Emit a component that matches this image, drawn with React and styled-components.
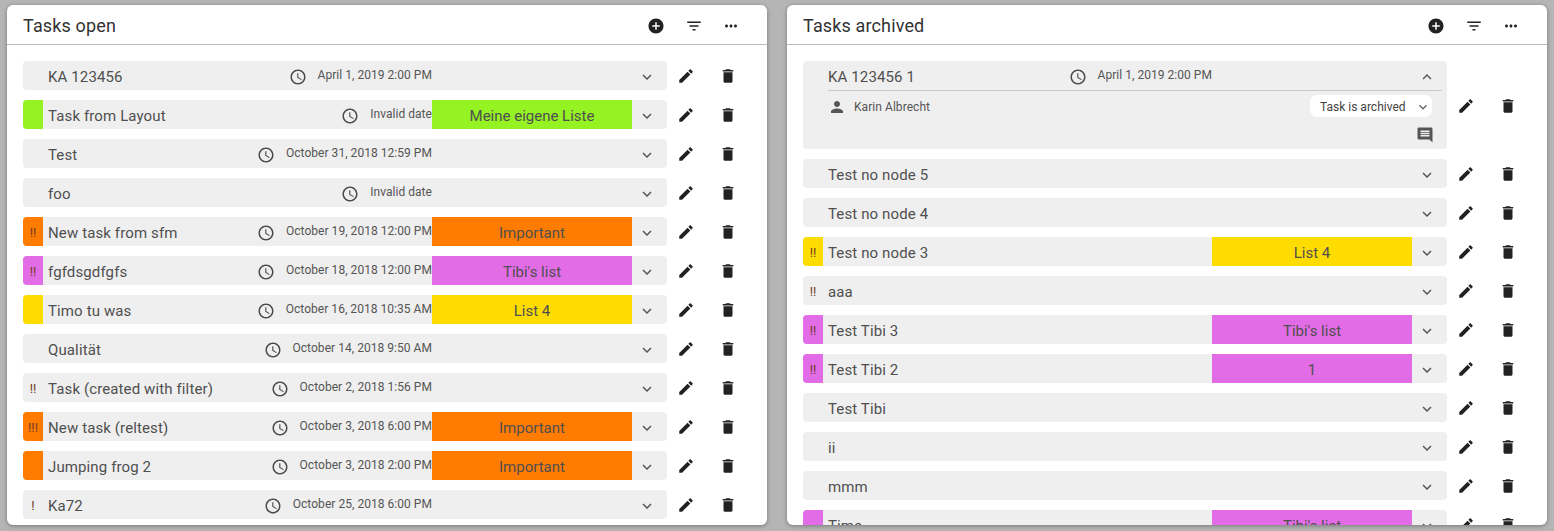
import React from 'react'
import styled, { createGlobalStyle } from 'styled-components'

const GlobalStyle = createGlobalStyle`
  html, body {
    margin: 0;
    padding: 0;
    background: #b5b5b5;
    font-family: Roboto, "Liberation Sans", sans-serif;
    overflow: hidden;
  }
`

const ORANGE = '#ff7c00'
const PINK = '#e26ce6'
const YELLOW = '#ffdc00'
const LIME = '#95f323'

const PATHS = {
  add: 'M12 2C6.48 2 2 6.48 2 12s4.48 10 10 10 10-4.48 10-10S17.52 2 12 2zm5 11h-4v4h-2v-4H7v-2h4V7h2v4h4v2z',
  filter: 'M10 18h4v-2h-4v2zM3 6v2h18V6H3zm3 7h12v-2H6v2z',
  more: 'M6 10c-1.1 0-2 .9-2 2s.9 2 2 2 2-.9 2-2-.9-2-2-2zm12 0c-1.1 0-2 .9-2 2s.9 2 2 2 2-.9 2-2-.9-2-2-2zm-6 0c-1.1 0-2 .9-2 2s.9 2 2 2 2-.9 2-2-.9-2-2-2z',
  edit: 'M3 17.25V21h3.75L17.81 9.94l-3.75-3.75L3 17.25zM20.71 7.04c.39-.39.39-1.02 0-1.41l-2.34-2.34c-.39-.39-1.02-.39-1.41 0l-1.83 1.83 3.75 3.75 1.83-1.83z',
  trash: 'M6 19c0 1.1.9 2 2 2h8c1.1 0 2-.9 2-2V7H6v12zM19 4h-3.5l-1-1h-5l-1 1H5v2h14V4z',
  down: 'M16.59 8.59L12 13.17 7.41 8.59 6 10l6 6 6-6z',
  up: 'M12 8l-6 6 1.41 1.41L12 10.83l4.59 4.58L18 14z',
  clock: 'M11.99 2C6.47 2 2 6.48 2 12s4.47 10 9.99 10C17.52 22 22 17.52 22 12S17.52 2 11.99 2zM12 20c-4.42 0-8-3.58-8-8s3.58-8 8-8 8 3.58 8 8-3.58 8-8 8zm.5-13H11v6l5.25 3.15.75-1.23-4.5-2.67z',
  person: 'M12 12c2.21 0 4-1.79 4-4s-1.79-4-4-4-4 1.79-4 4 1.79 4 4 4zm0 2c-2.67 0-8 1.34-8 4v2h16v-2c0-2.66-5.33-4-8-4z',
  comment: 'M21.99 4c0-1.1-.89-2-1.99-2H4c-1.1 0-2 .9-2 2v12c0 1.1.9 2 2 2h14l4 4-.01-18zM18 14H6v-2h12v2zm0-3H6V9h12v2zm0-3H6V6h12v2z',
}

const Svg = styled.svg`
  display: block;
  flex: none;
  width: ${(props) => props.$size || 18}px;
  height: ${(props) => props.$size || 18}px;
  fill: ${(props) => props.$color || '#222'};
`

const Icon = ({ name, size, color }) => (
  <Svg viewBox="0 0 24 24" $size={size} $color={color}>
    <path d={PATHS[name]} />
  </Svg>
)

const Page = styled.div`
  display: grid;
  grid-template-columns: 760px 760px;
  column-gap: 20px;
  padding: 5px 7px;
  height: 531px;
  box-sizing: border-box;
`

const Card = styled.section`
  height: 520px;
  background: #fff;
  border-radius: 6px;
  box-shadow: 0 1px 4px rgba(0, 0, 0, 0.35);
  display: flex;
  flex-direction: column;
  overflow: hidden;
`

const Header = styled.header`
  flex: none;
  height: 40px;
  box-sizing: border-box;
  border-bottom: 1px solid #bdbdbd;
  padding: 2px 27px 0 16px;
  display: flex;
  align-items: center;
  gap: 19.5px;
`

const Heading = styled.h2`
  flex: 1;
  margin: 0;
  font-size: 18px;
  font-weight: 400;
  letter-spacing: 0.14px;
  color: #333;
`

const List = styled.div`
  flex: 1;
  min-height: 0;
  overflow: hidden;
  padding: 16px 0 0 16px;
  display: flex;
  flex-direction: column;
  gap: 10px;
`

const Item = styled.div`
  flex: none;
  display: flex;
  align-items: center;
`

const Panel = styled.div`
  width: 644px;
  background: #efefef;
  border-radius: 4px;
  overflow: hidden;
`

const Summary = styled.div`
  height: 29px;
  display: flex;
  align-items: stretch;
`

const Flag = styled.div`
  flex: none;
  width: 20px;
  background: ${(props) => props.$color || 'transparent'};
  color: #6e3a24;
  font-size: 13px;
  text-align: center;
  line-height: 31px;
`

const Title = styled.div`
  flex: 1;
  min-width: 0;
  padding-left: 5px;
  font-size: 15px;
  letter-spacing: 0.12px;
  line-height: 32px;
  color: #4f4f4f;
  white-space: nowrap;
`

const DateBox = styled.div`
  flex: none;
  padding-top: 2px;
  display: flex;
  align-items: center;
`

const DateText = styled.span`
  margin-left: 11px;
  padding-bottom: 3px;
  font-size: 12px;
  letter-spacing: 0.04px;
  color: #555;
  white-space: nowrap;
`

const Tag = styled.div`
  flex: none;
  width: 200px;
  background: ${(props) => props.$color || 'transparent'};
  color: #4f4f4f;
  font-size: 15px;
  line-height: 32px;
  text-align: center;
`

const Toggle = styled.div`
  flex: none;
  width: 30px;
  padding: 2px 5px 0 0;
  display: flex;
  align-items: center;
  justify-content: center;
`

const Details = styled.div`
  margin: 0 5px 0 25px;
  border-top: 1px solid #c8c8c8;
  height: 59px;
  box-sizing: border-box;
  padding: 4px 10px 0 0;
  display: flex;
  flex-direction: column;
  align-items: stretch;
`

const DetailRow = styled.div`
  display: flex;
  align-items: center;
  justify-content: space-between;
`

const Person = styled.div`
  display: flex;
  align-items: center;
  gap: 8px;
  font-size: 12px;
  letter-spacing: 0.06px;
  line-height: 16px;
  padding-top: 1px;
  color: #555;
`

const Status = styled.div`
  width: 122px;
  height: 22px;
  box-sizing: border-box;
  background: #fff;
  border-radius: 7px;
  padding: 1px 1px 0 10px;
  display: flex;
  align-items: center;
  justify-content: space-between;
  font-size: 12px;
  color: #444;
`

const CommentRow = styled.div`
  display: flex;
  justify-content: flex-end;
  margin: 9px -2px 0 0;
`

const Actions = styled.div`
  flex: none;
  display: flex;
  align-items: center;
  gap: 24px;
  padding: 1px 0 0 10px;
`

const openTasks = [
  { title: 'KA 123456', date: 'April 1, 2019 2:00 PM' },
  { title: 'Task from Layout', date: 'Invalid date', flag: LIME, tag: 'Meine eigene Liste' },
  { title: 'Test', date: 'October 31, 2018 12:59 PM' },
  { title: 'foo', date: 'Invalid date' },
  { title: 'New task from sfm', date: 'October 19, 2018 12:00 PM', flag: ORANGE, mark: '!!', tag: 'Important' },
  { title: 'fgfdsgdfgfs', date: 'October 18, 2018 12:00 PM', flag: PINK, mark: '!!', tag: "Tibi's list" },
  { title: 'Timo tu was', date: 'October 16, 2018 10:35 AM', flag: YELLOW, tag: 'List 4' },
  { title: 'Qualität', date: 'October 14, 2018 9:50 AM' },
  { title: 'Task (created with filter)', date: 'October 2, 2018 1:56 PM', mark: '!!' },
  { title: 'New task (reltest)', date: 'October 3, 2018 6:00 PM', flag: ORANGE, mark: '!!!', tag: 'Important' },
  { title: 'Jumping frog 2', date: 'October 3, 2018 2:00 PM', flag: ORANGE, tag: 'Important' },
  { title: 'Ka72', date: 'October 25, 2018 6:00 PM', mark: '!' },
]

const archivedTasks = [
  { title: 'KA 123456 1', date: 'April 1, 2019 2:00 PM', open: true, owner: 'Karin Albrecht' },
  { title: 'Test no node 5' },
  { title: 'Test no node 4' },
  { title: 'Test no node 3', flag: YELLOW, mark: '!!', tag: 'List 4' },
  { title: 'aaa', mark: '!!' },
  { title: 'Test Tibi 3', flag: PINK, mark: '!!', tag: "Tibi's list" },
  { title: 'Test Tibi 2', flag: PINK, mark: '!!', tag: '1' },
  { title: 'Test Tibi' },
  { title: 'ii' },
  { title: 'mmm' },
  { title: 'Time', flag: PINK, tag: "Tibi's list" },
]

const Task = ({ task }) => (
  <Item>
    <Panel>
      <Summary>
        <Flag $color={task.flag}>{task.mark}</Flag>
        <Title>{task.title}</Title>
        {task.date && (
          <DateBox>
            <Icon name="clock" color="#4a4a4a" />
            <DateText>{task.date}</DateText>
          </DateBox>
        )}
        <Tag $color={task.flag && task.tag ? task.flag : undefined}>{task.tag}</Tag>
        <Toggle>
          <Icon name={task.open ? 'up' : 'down'} color="#555" />
        </Toggle>
      </Summary>
      {task.open && (
        <Details>
          <DetailRow>
            <Person>
              <Icon name="person" color="#555" />
              {task.owner}
            </Person>
            <Status>
              Task is archived
              <Icon name="down" size={16} color="#666" />
            </Status>
          </DetailRow>
          <CommentRow>
            <Icon name="comment" color="#555" />
          </CommentRow>
        </Details>
      )}
    </Panel>
    <Actions>
      <Icon name="edit" />
      <Icon name="trash" />
    </Actions>
  </Item>
)

const TaskCard = ({ title, tasks }) => (
  <Card>
    <Header>
      <Heading>{title}</Heading>
      <Icon name="add" />
      <Icon name="filter" />
      <Icon name="more" />
    </Header>
    <List>
      {tasks.map((task) => (
        <Task key={task.title} task={task} />
      ))}
    </List>
  </Card>
)

const App = () => (
  <>
    <GlobalStyle />
    <Page>
      <TaskCard title="Tasks open" tasks={openTasks} />
      <TaskCard title="Tasks archived" tasks={archivedTasks} />
    </Page>
  </>
)

export default App
